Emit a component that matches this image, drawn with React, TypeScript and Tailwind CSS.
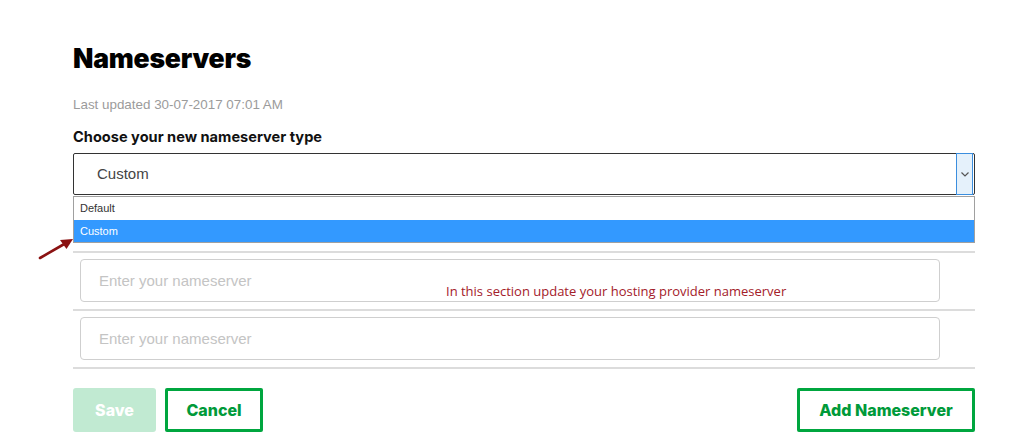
import React from "react";

const sans = { fontFamily: "Inter, 'Liberation Sans', sans-serif" };

function NameserverRow() {
  return (
    <div className="pt-[6px] pb-[7px] pl-[7px] pr-[35px] border-b-2 border-[#dcdcdc]">
      <input
        placeholder="Enter your nameserver"
        className="w-full h-[43px] rounded-[4px] border border-[#cfcfcf] px-[18px] text-[15px] text-[#333] placeholder:text-[#c4c4c4] outline-none font-['Liberation_Sans',sans-serif]"
      />
    </div>
  );
}

export default function App() {
  return (
    <div className="relative w-[1024px] h-[446px] bg-white overflow-hidden">
      <div className="pl-[73px] w-[975px]">
        {/* Heading */}
        <h1 style={sans} className="mt-[42px] h-[32px] leading-[32px] text-[26.5px] font-black text-black tracking-[-0.2px]">
          Nameservers
        </h1>
        <p className="mt-[23px] h-[16px] leading-[16px] text-[13.4px] text-[#9b9b9b] font-['Liberation_Sans',sans-serif]">
          Last updated 30-07-2017 07:01 AM
        </p>
        <p style={sans} className="mt-[15px] h-[18px] leading-[18px] text-[14.6px] font-bold text-[#111]">
          Choose your new nameserver type
        </p>

        {/* Select (open) */}
        <div className="mt-[7px] flex h-[42px] border border-[#333] rounded-[2px] bg-white">
          <div className="flex-1 flex items-center pl-[23px] text-[15px] text-[#444] font-['Liberation_Sans',sans-serif]">
            Custom
          </div>
          <div className="w-[17px] my-[-1px] mr-[1px] border border-[#3b8ede] bg-[#e5f1fb] flex items-center justify-center">
            <svg width="8" height="5" viewBox="0 0 8 5">
              <path d="M0.5 0.5 L4 4 L7.5 0.5" fill="none" stroke="#555" strokeWidth="1.2" />
            </svg>
          </div>
        </div>
        <div className="mt-[1px] border border-[#a0a0a0] text-[11px] font-['Liberation_Sans',sans-serif]">
          <div className="h-[23px] flex items-center pl-[6px] text-[#333]">Default</div>
          <div className="h-[22px] flex items-center pl-[6px] bg-[#3399ff] text-white">Custom</div>
        </div>

        {/* Nameserver inputs */}
        <div className="mt-[8px] border-t-2 border-[#dcdcdc]">
          <NameserverRow />
          <NameserverRow />
        </div>

        {/* Actions */}
        <div style={sans} className="mt-[19px] flex items-center gap-[9px]">
          <button className="w-[83px] h-[44px] rounded-[3px] bg-[#c1ead2] text-white text-[16px] font-extrabold">
            Save
          </button>
          <button className="w-[98px] h-[44px] rounded-[2px] border-[3px] border-[#00a63f] text-[#009a3a] text-[16px] font-extrabold">
            Cancel
          </button>
          <button className="ml-auto w-[178px] h-[44px] rounded-[2px] border-[3px] border-[#00a63f] text-[#009a3a] text-[16px] font-extrabold">
            Add Nameserver
          </button>
        </div>
      </div>

      {/* Annotations */}
      <svg className="absolute left-[36px] top-[234px]" width="42" height="28" viewBox="0 0 42 28">
        <path d="M4 24 L30 9" stroke="#8b1212" strokeWidth="2.6" strokeLinecap="round" />
        <path d="M37 5 L24 6 L30.5 15 Z" fill="#8b1212" />
      </svg>
      <span className="absolute left-[446px] top-[282px] text-[13px] text-[#a3202a] font-['Open_Sans',sans-serif]">
        In this section update your hosting provider nameserver
      </span>
    </div>
  );
}
